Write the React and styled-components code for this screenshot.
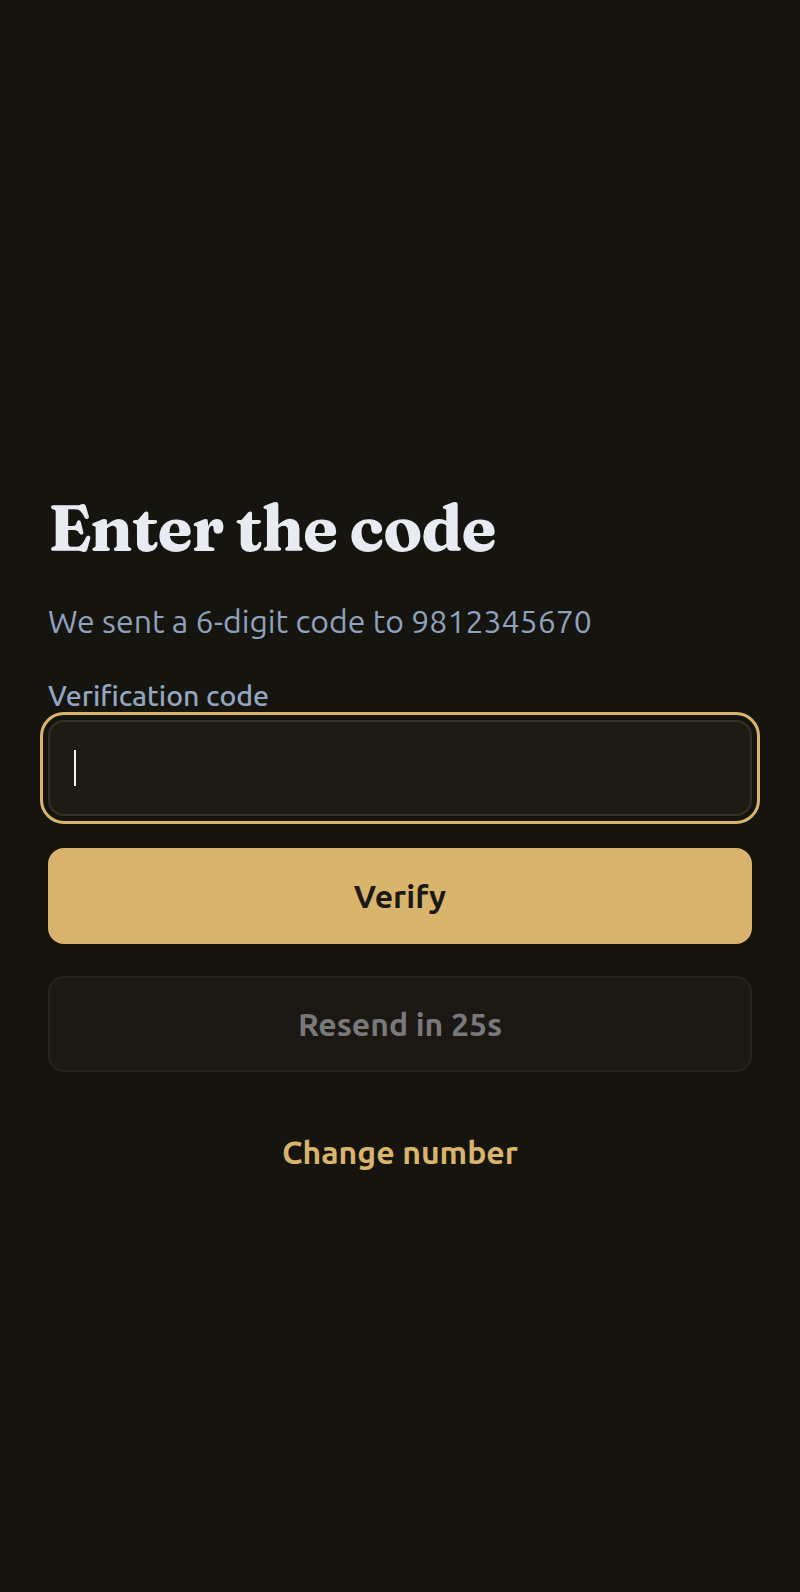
import React, { useState } from 'react';
import styled, { createGlobalStyle } from 'styled-components';

const GlobalStyle = createGlobalStyle`
  html, body {
    margin: 0;
    padding: 0;
    background: #16140f;
  }
  body {
    font-family: Ubuntu, "Noto Sans", "Open Sans", sans-serif;
    -webkit-font-smoothing: antialiased;
  }
  * {
    box-sizing: border-box;
  }
`;

const Page = styled.main`
  min-height: 1592px;
  display: flex;
  flex-direction: column;
  justify-content: center;
  padding: 96px 48px 0;
`;

const Title = styled.h1`
  margin: 0;
  font-family: Fraunces, "Liberation Serif", serif;
  font-size: 64px;
  font-weight: 700;
  line-height: 80px;
  letter-spacing: -1px;
  color: #e9ebf3;
`;

const Subtitle = styled.p`
  margin: 29px 0 0;
  font-size: 32px;
  line-height: 48px;
  color: #8ea2bd;
`;

const Form = styled.form`
  display: flex;
  flex-direction: column;
  margin-top: 29px;
`;

const Label = styled.label`
  font-size: 28.5px;
  font-weight: 500;
  line-height: 42px;
  color: #93a6c0;
  margin-bottom: 4px;
`;

const Field = styled.div`
  position: relative;
  border-radius: 16px;
  outline: 3px solid #dab56c;
  outline-offset: 5px;
`;

const CodeInput = styled.input`
  display: block;
  height: 96px;
  width: 100%;
  padding: 0 24px;
  border: 2px solid #363026;
  border-radius: 16px;
  background: #1e1b15;
  color: #e9ebf3;
  caret-color: transparent;
  font-family: inherit;
  font-size: 32px;
  outline: none;
`;

const Caret = styled.span`
  position: absolute;
  left: 26px;
  top: 30px;
  width: 2px;
  height: 36px;
  background: #f1f1f1;
  pointer-events: none;
`;

const Button = styled.button`
  height: 96px;
  width: 100%;
  margin-top: 32px;
  border-radius: 16px;
  font-family: inherit;
  font-size: 32px;
  font-weight: 700;
  cursor: pointer;
  border: 2px solid ${(p) => (p.variant === 'primary' ? '#d9b46c' : p.variant === 'muted' ? '#26231d' : 'transparent')};
  background: ${(p) => (p.variant === 'primary' ? '#d9b46c' : p.variant === 'muted' ? '#1b1813' : 'transparent')};
  color: ${(p) => (p.variant === 'primary' ? '#1b1914' : p.variant === 'muted' ? '#78797a' : '#d9b46c')};
`;

const App = () => {
  const [code, setCode] = useState('');
  return (
    <>
      <GlobalStyle />
      <Page>
        <Title>Enter the code</Title>
        <Subtitle>We sent a 6-digit code to 9812345670</Subtitle>
        <Form onSubmit={(e) => e.preventDefault()}>
          <Label htmlFor="code">Verification code</Label>
          <Field>
            <CodeInput
              id="code"
              inputMode="numeric"
              value={code}
              onChange={(e) => setCode(e.target.value)}
            />
            {code === '' && <Caret />}
          </Field>
          <Button type="submit" variant="primary">Verify</Button>
          <Button type="button" variant="muted" disabled>Resend in 25s</Button>
          <Button type="button" variant="link">Change number</Button>
        </Form>
      </Page>
    </>
  );
};

export default App;
